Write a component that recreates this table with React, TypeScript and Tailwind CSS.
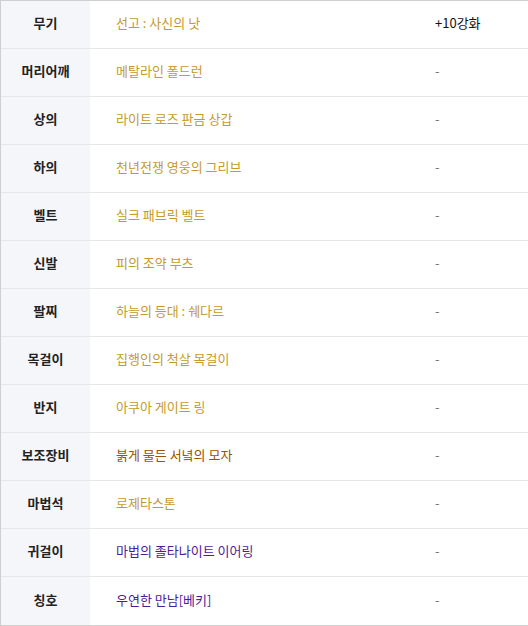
const GOLD = "text-[#c49a2c]";
const BROWN = "text-[#9a5200]";
const PURPLE = "text-[#4e1a9c]";

const rows: { slot: string; name: string; color: string; upgrade: string }[] = [
  { slot: "무기", name: "선고 : 사신의 낫", color: GOLD, upgrade: "+10강화" },
  { slot: "머리어깨", name: "메탈라인 폴드런", color: GOLD, upgrade: "-" },
  { slot: "상의", name: "라이트 로즈 판금 상갑", color: GOLD, upgrade: "-" },
  { slot: "하의", name: "천년전쟁 영웅의 그리브", color: GOLD, upgrade: "-" },
  { slot: "벨트", name: "실크 패브릭 벨트", color: GOLD, upgrade: "-" },
  { slot: "신발", name: "피의 조약 부츠", color: GOLD, upgrade: "-" },
  { slot: "팔찌", name: "하늘의 등대 : 쉐다르", color: GOLD, upgrade: "-" },
  { slot: "목걸이", name: "집행인의 척살 목걸이", color: GOLD, upgrade: "-" },
  { slot: "반지", name: "아쿠아 게이트 링", color: GOLD, upgrade: "-" },
  { slot: "보조장비", name: "붉게 물든 서녘의 모자", color: BROWN, upgrade: "-" },
  { slot: "마법석", name: "로제타스톤", color: GOLD, upgrade: "-" },
  { slot: "귀걸이", name: "마법의 졸타나이트 이어링", color: PURPLE, upgrade: "-" },
  { slot: "칭호", name: "우연한 만남[베키]", color: PURPLE, upgrade: "-" },
];

export default function App() {
  return (
    <div className="w-[528px] h-[626px] bg-white overflow-hidden font-['Noto_Sans_CJK_KR','Noto_Sans',sans-serif] text-[13px]">
      <div className="border-t border-l border-b border-[#cfcfcf]">
        {rows.map((r, i) => (
          <div
            key={r.slot}
            className={`grid grid-cols-[89px_345px_1fr] h-[48px] ${
              i < rows.length - 1 ? "border-b border-[#e6e6e6]" : ""
            }`}
          >
            <div className="bg-[#f5f6fa] flex items-center justify-center pb-[3px] font-bold text-[#222]">
              {r.slot}
            </div>
            <div className={`flex items-center pl-[26px] pb-[3px] ${r.color}`}>{r.name}</div>
            <div
              className={`flex items-center pb-[3px] ${
                r.upgrade === "-" ? "text-[#777]" : "text-[#111]"
              }`}
            >
              {r.upgrade}
            </div>
          </div>
        ))}
      </div>
    </div>
  );
}
